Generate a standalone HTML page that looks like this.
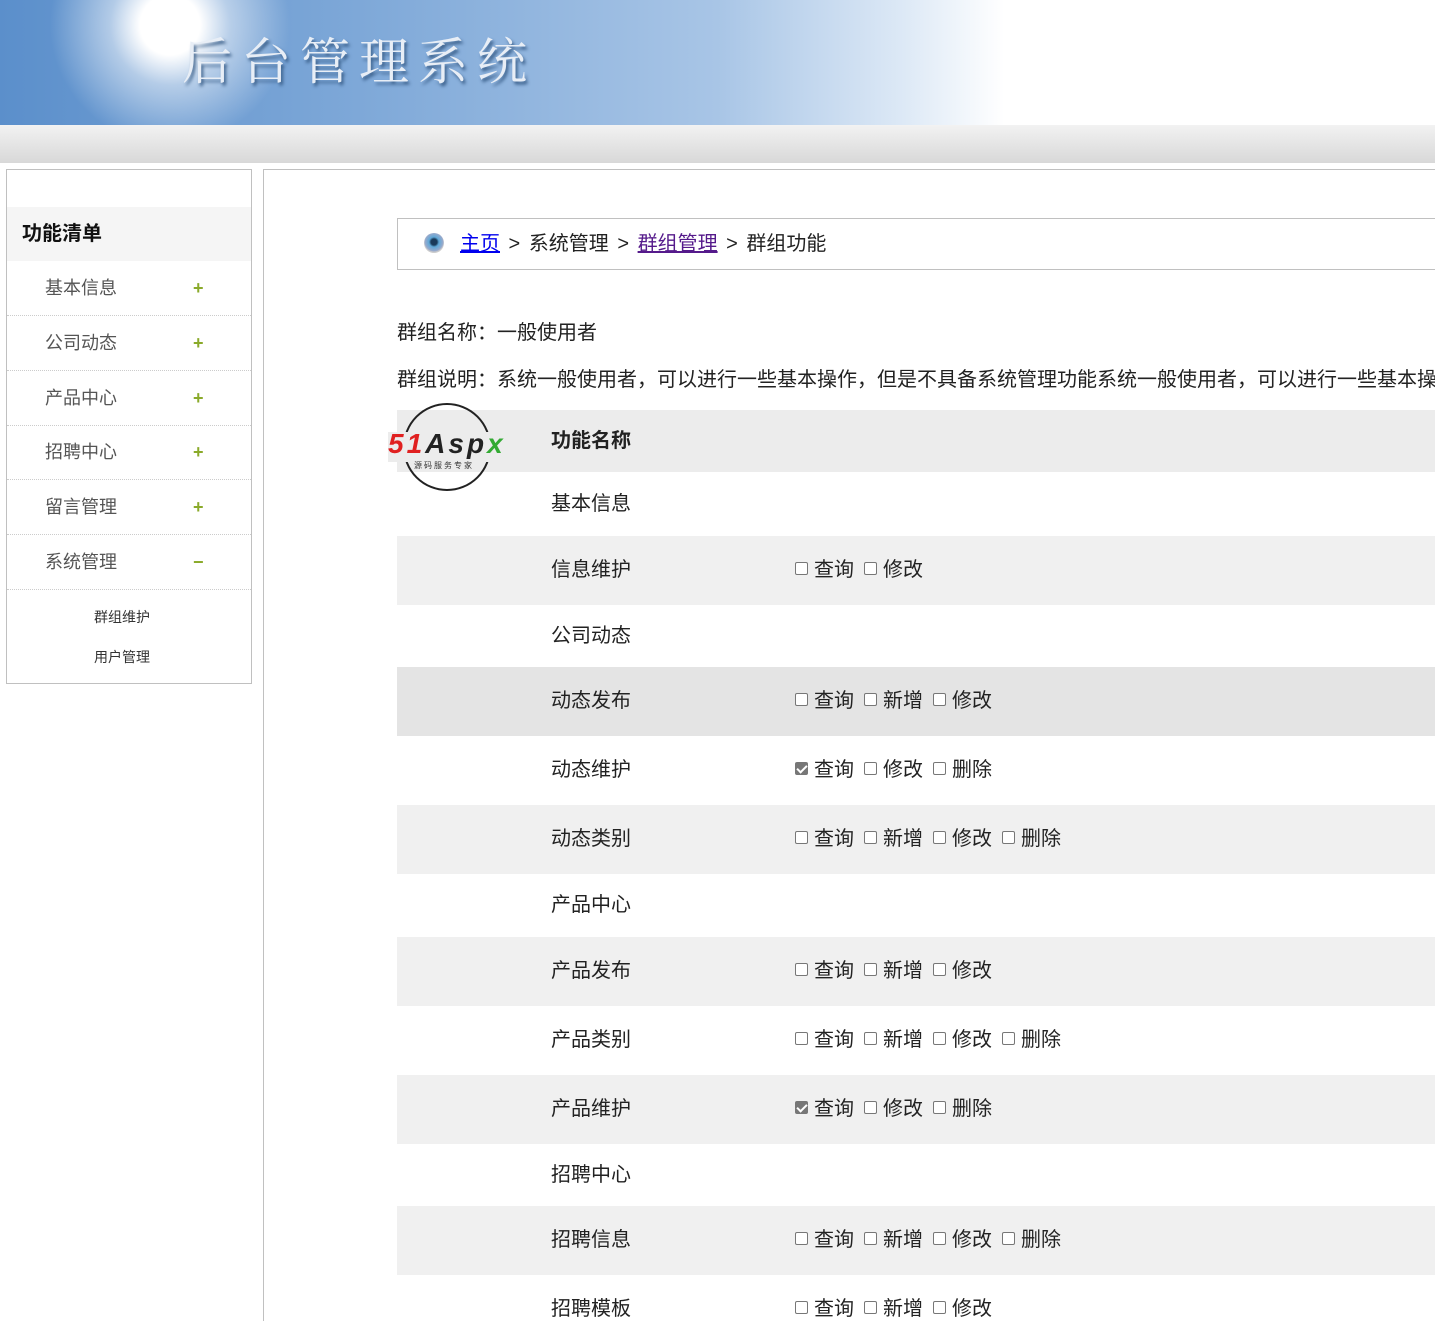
<!DOCTYPE html>
<html><head><meta charset="utf-8"><style>
*{margin:0;padding:0;box-sizing:border-box}
html,body{width:1435px;height:1321px;overflow:hidden}
body{background:#fff;font-family:"Liberation Sans","Noto Sans CJK SC",sans-serif;color:#222;position:relative}
.a{position:absolute}
.banner{left:0;top:0;width:1435px;height:125px;background:linear-gradient(90deg,#5b8fcb 0%,#7ea8d8 25%,#a8c5e6 50%,#dde9f6 63%,#fff 70%)}
.bar{left:0;top:125px;width:1435px;height:38px;background:linear-gradient(#f2f2f2,#d8d8d8)}
.left{left:6px;top:169px;width:246px;height:515px;border:1px solid #c0c0c0}
.lh{left:7px;top:207px;width:244px;height:54px;background:#f5f5f5;font-weight:bold;font-size:20px;line-height:54px;padding-left:15px;color:#111}
.li{left:7px;width:244px;height:55px;border-bottom:1px dotted #ccc;font-size:18px;color:#555;line-height:54px;padding-left:38px}
.li b{position:absolute;left:186px;color:#8aaa2a;font-size:18px}
.sub{left:94px;font-size:14px;color:#333}
.main{left:263px;top:169px;width:1180px;height:1152px;border-left:1px solid #c0c0c0;border-top:1px solid #c0c0c0}
.crumb{left:397px;top:218px;width:1050px;height:52px;border:1px solid #c0c0c0;font-size:20px;line-height:50px;padding-left:62px;word-spacing:3px;white-space:nowrap}
.crumb a{text-decoration:underline}
.t{font-size:20px;left:397px;white-space:nowrap}
.row{left:397px;width:1040px;font-size:20px;white-space:nowrap}
.row span{position:absolute;left:154px}
.row i{position:absolute;left:398px;font-style:normal}
.cb{display:inline-block;width:13px;height:13px;border:1px solid #777;border-radius:2px;margin-right:6px;margin-left:10px;vertical-align:1px;background:#fff}
.cb:first-child{margin-left:0}
.ck{background:#777;border-color:#777;position:relative}
.ck:after{content:"";position:absolute;left:3px;top:0px;width:4px;height:8px;border:solid #fff;border-width:0 2px 2px 0;transform:rotate(45deg)}
</style></head><body>
<div class="a banner"></div>
<div class="a" style="left:0;top:0;width:300px;height:125px;background:radial-gradient(circle at 170px 25px,#fff 0,#fff 30px,rgba(255,255,255,.5) 60px,rgba(255,255,255,0) 120px)"></div>
<div class="a" style="left:182px;top:22px;font-family:'Noto Serif CJK SC',serif;font-size:50px;letter-spacing:9px;color:#e8eef6;text-shadow:2px 3px 3px #3a5f8a">后台管理系统</div>
<div class="a bar"></div>

<div class="a left"></div>
<div class="a lh">功能清单</div>
<div class="a li" style="top:261px">基本信息<b>+</b></div>
<div class="a li" style="top:316px">公司动态<b>+</b></div>
<div class="a li" style="top:371px">产品中心<b>+</b></div>
<div class="a li" style="top:425px">招聘中心<b>+</b></div>
<div class="a li" style="top:480px">留言管理<b>+</b></div>
<div class="a li" style="top:535px">系统管理<b>−</b></div>
<div class="a sub" style="top:607px">群组维护</div>
<div class="a sub" style="top:647px">用户管理</div>

<div class="a main"></div>
<div class="a crumb"><span class="a" style="left:26px;top:14px;width:20px;height:20px;border-radius:50%;background:radial-gradient(circle at 50% 45%,#1a3a5a 0,#1a3a5a 3px,#5fa8d8 5px,#9ac 9px,#ccc 10px)"></span><a style="color:#00e">主页</a> &gt; 系统管理 &gt; <a style="color:#551a8b">群组管理</a> &gt; 群组功能</div>
<div class="a t" style="top:316px">群组名称：一般使用者</div>
<div class="a t" style="top:363px">群组说明：系统一般使用者，可以进行一些基本操作，但是不具备系统管理功能系统一般使用者，可以进行一些基本操作</div>

<div class="a row" style="top:410px;height:62px;background:#ececec;line-height:62px;font-weight:bold"><span>功能名称</span></div>
<div class="a row" style="top:472px;height:64px;line-height:64px"><span>基本信息</span></div>
<div class="a row" style="top:536px;height:69px;line-height:69px;background:#f0f0f0"><span>信息维护</span><i><b class="cb"></b>查询<b class="cb"></b>修改</i></div>
<div class="a row" style="top:605px;height:62px;line-height:62px"><span>公司动态</span></div>
<div class="a row" style="top:667px;height:69px;line-height:69px;background:#e4e4e4"><span>动态发布</span><i><b class="cb"></b>查询<b class="cb"></b>新增<b class="cb"></b>修改</i></div>
<div class="a row" style="top:736px;height:69px;line-height:69px"><span>动态维护</span><i><b class="cb ck"></b>查询<b class="cb"></b>修改<b class="cb"></b>删除</i></div>
<div class="a row" style="top:805px;height:69px;line-height:69px;background:#f0f0f0"><span>动态类别</span><i><b class="cb"></b>查询<b class="cb"></b>新增<b class="cb"></b>修改<b class="cb"></b>删除</i></div>
<div class="a row" style="top:874px;height:63px;line-height:63px"><span>产品中心</span></div>
<div class="a row" style="top:937px;height:69px;line-height:69px;background:#f0f0f0"><span>产品发布</span><i><b class="cb"></b>查询<b class="cb"></b>新增<b class="cb"></b>修改</i></div>
<div class="a row" style="top:1006px;height:69px;line-height:69px"><span>产品类别</span><i><b class="cb"></b>查询<b class="cb"></b>新增<b class="cb"></b>修改<b class="cb"></b>删除</i></div>
<div class="a row" style="top:1075px;height:69px;line-height:69px;background:#f0f0f0"><span>产品维护</span><i><b class="cb ck"></b>查询<b class="cb"></b>修改<b class="cb"></b>删除</i></div>
<div class="a row" style="top:1144px;height:62px;line-height:62px"><span>招聘中心</span></div>
<div class="a row" style="top:1206px;height:69px;line-height:69px;background:#f0f0f0"><span>招聘信息</span><i><b class="cb"></b>查询<b class="cb"></b>新增<b class="cb"></b>修改<b class="cb"></b>删除</i></div>
<div class="a row" style="top:1275px;height:46px;line-height:69px;overflow:hidden"><span>招聘模板</span><i><b class="cb"></b>查询<b class="cb"></b>新增<b class="cb"></b>修改</i></div>

<div class="a" style="left:403px;top:403px;width:88px;height:88px;border:2px solid #222;border-radius:50%"></div>
<div class="a" style="left:388px;top:432px;width:124px;height:30px;background:#ececec"></div>
<div class="a" style="left:388px;top:428px;font:italic bold 28px 'Liberation Sans',sans-serif;letter-spacing:3px"><span style="color:#e02020">51</span><span style="color:#222">Asp</span><span style="color:#3a3">x</span></div>
<div class="a" style="left:414px;top:460px;font-size:8px;color:#333;letter-spacing:2px">源码服务专家</div>
</body></html>
